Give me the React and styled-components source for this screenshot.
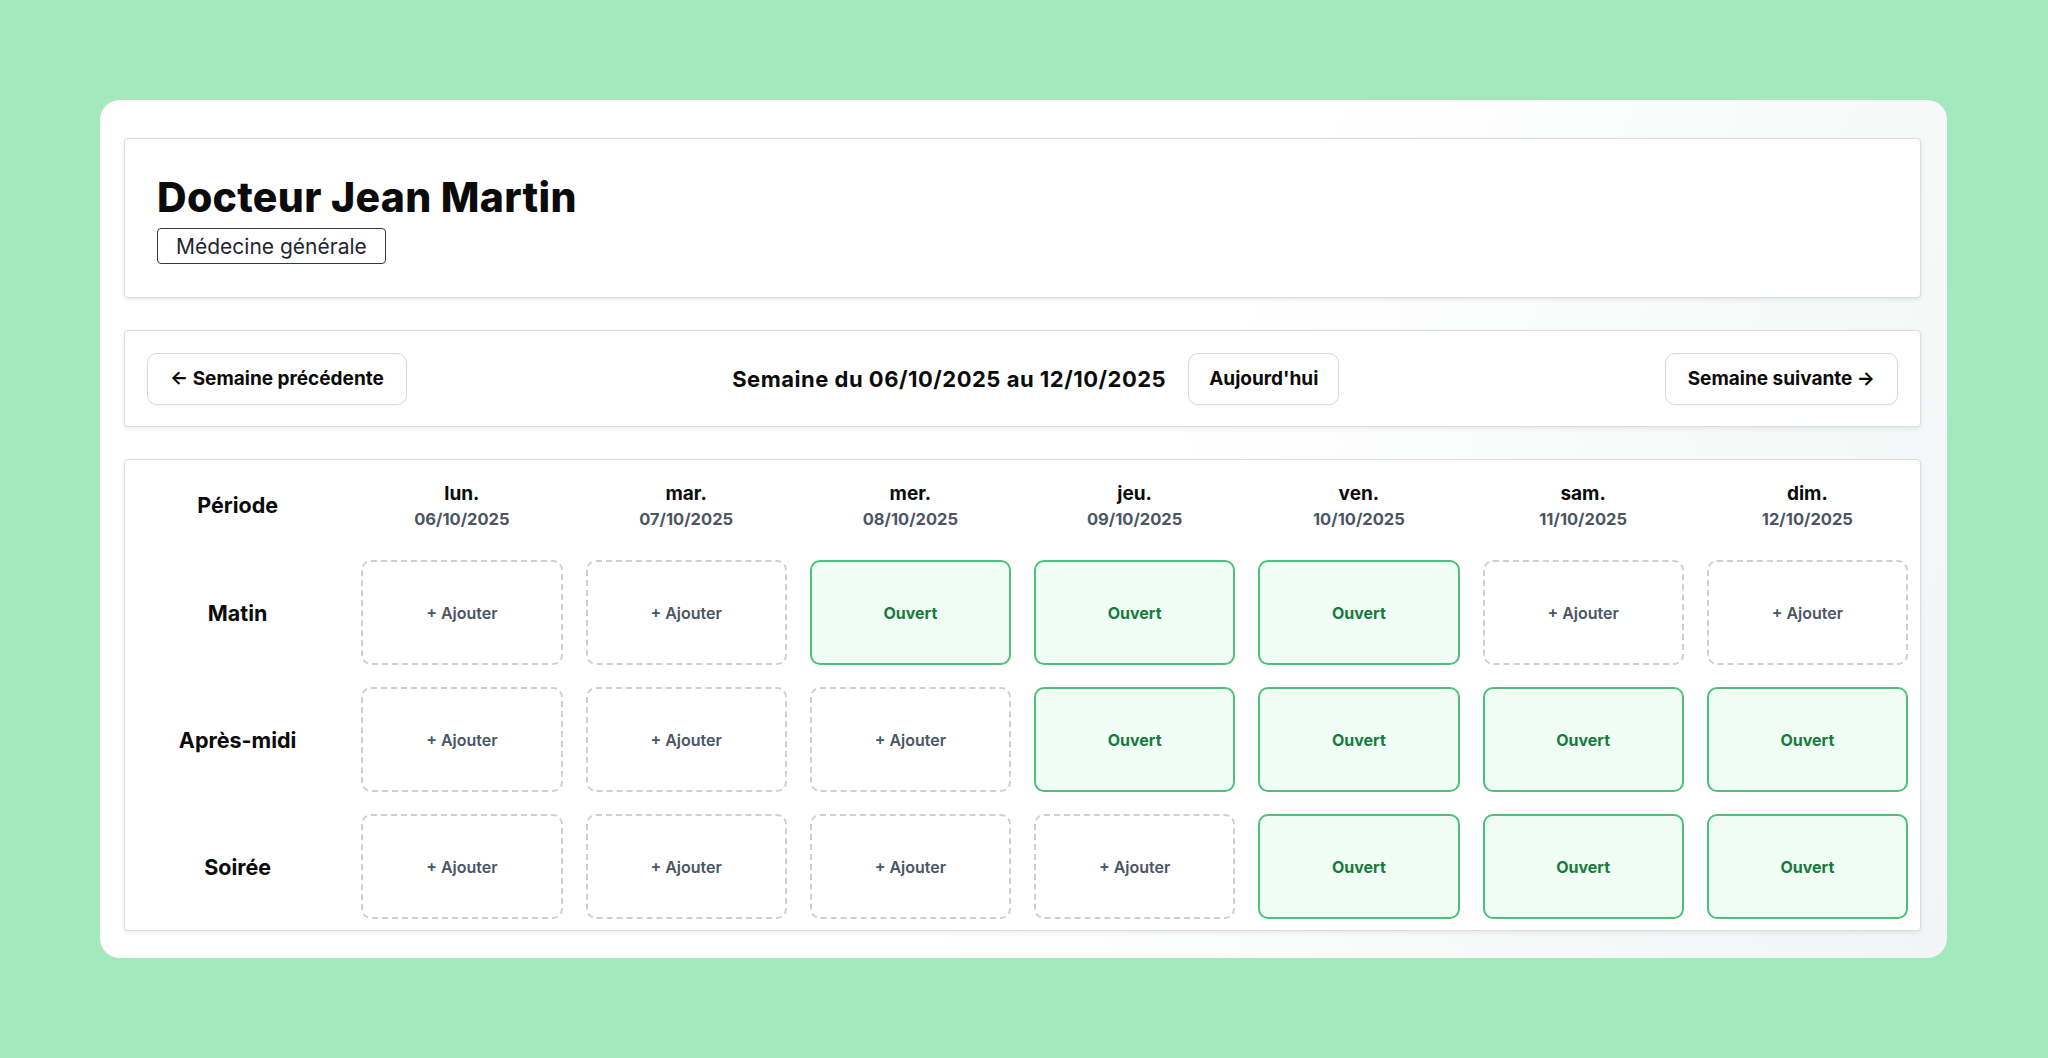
import React from 'react';
import styled, { createGlobalStyle } from 'styled-components';

const GlobalStyle = createGlobalStyle`
  html, body {
    margin: 0;
    padding: 0;
    background: #a4e9bd;
    font-family: Inter, "Noto Sans", Arial, sans-serif;
    color: #0b0b0b;
  }
`;

const Page = styled.div`
  padding: 100px 101px 102px 100px;
`;

// Panneau blanc arrondi qui contient toute la fiche.
const Panel = styled.div`
  background: linear-gradient(115deg, #ffffff 55%, #f1f5f5 100%);
  border-radius: 20px;
  padding: 38px 26px 27px 24px;
  display: flex;
  flex-direction: column;
  gap: 32px;
`;

const Card = styled.section`
  background: #ffffff;
  border: 1px solid #dcdcdc;
  border-radius: 4px;
  box-shadow: 0 2px 4px rgba(0, 0, 0, 0.08);
`;

const Header = styled(Card)`
  height: 160px;
  box-sizing: border-box;
  padding: 33px 32px;
  display: flex;
  flex-direction: column;
  align-items: flex-start;
  gap: 6px;
`;

const Title = styled.h1`
  margin: 0;
  font-size: 41px;
  line-height: 50px;
  font-weight: 800;
  letter-spacing: 0.3px;
`;

const Badge = styled.span`
  display: inline-flex;
  align-items: center;
  height: 37px;
  box-sizing: border-box;
  padding: 0 18px;
  border: 1.5px solid #3a3a3a;
  border-radius: 4px;
  font-size: 21px;
  color: #1f2630;
`;

const Nav = styled(Card)`
  height: 97px;
  box-sizing: border-box;
  padding: 0 22px;
  display: flex;
  align-items: center;
  justify-content: space-between;
`;

const NavButton = styled.button`
  height: 52px;
  padding: 0 ${(p) => p.$pad || 22}px;
  border: 1px solid #d9d9d9;
  border-radius: 10px;
  background: #ffffff;
  font-family: inherit;
  font-size: 19px;
  font-weight: 700;
  color: #0b0b0b;
  cursor: pointer;
  box-shadow: 0 1px 2px rgba(0, 0, 0, 0.04);
`;

const WeekGroup = styled.div`
  display: flex;
  align-items: center;
  gap: 22px;
`;

const WeekLabel = styled.span`
  font-size: 22px;
  font-weight: 700;
  letter-spacing: 0.5px;
`;

const Planning = styled(Card)`
  padding: 12px 12px 11px;
  display: grid;
  grid-template-columns: repeat(8, 1fr);
  grid-template-rows: 66px repeat(3, 105px);
  column-gap: 23px;
  row-gap: 22px;
`;

const HeadCell = styled.div`
  display: flex;
  flex-direction: column;
  align-items: center;
  justify-content: center;
  gap: 4px;
`;

const DayName = styled.span`
  font-size: 19px;
  font-weight: 700;
`;

const DayDate = styled.span`
  font-size: 16.5px;
  font-weight: 700;
  color: #4b5563;
`;

const RowLabel = styled.div`
  display: flex;
  align-items: center;
  justify-content: center;
  font-size: 21.5px;
  font-weight: 700;
`;

const Slot = styled.div`
  display: flex;
  align-items: center;
  justify-content: center;
  box-sizing: border-box;
  border-radius: 10px;
  font-size: 16px;
  font-weight: ${(p) => (p.$open ? 700 : 600)};
  border: 2px ${(p) => (p.$open ? 'solid #4fbf7c' : 'dashed #cfcfcf')};
  background: ${(p) => (p.$open ? '#f0fdf4' : '#ffffff')};
  color: ${(p) => (p.$open ? '#177a3d' : '#4b5563')};
  cursor: pointer;
`;

const days = [
  { name: 'lun.', date: '06/10/2025' },
  { name: 'mar.', date: '07/10/2025' },
  { name: 'mer.', date: '08/10/2025' },
  { name: 'jeu.', date: '09/10/2025' },
  { name: 'ven.', date: '10/10/2025' },
  { name: 'sam.', date: '11/10/2025' },
  { name: 'dim.', date: '12/10/2025' },
];

// Créneaux ouverts par période (index du jour dans la semaine).
const periods = [
  { label: 'Matin', open: [2, 3, 4] },
  { label: 'Après-midi', open: [3, 4, 5, 6] },
  { label: 'Soirée', open: [4, 5, 6] },
];

function App() {
  return (
    <Page>
      <GlobalStyle />
      <Panel>
        <Header>
          <Title>Docteur Jean Martin</Title>
          <Badge>Médecine générale</Badge>
        </Header>

        <Nav>
          <NavButton>← Semaine précédente</NavButton>
          <WeekGroup>
            <WeekLabel>Semaine du 06/10/2025 au 12/10/2025</WeekLabel>
            <NavButton $pad={20}>Aujourd'hui</NavButton>
          </WeekGroup>
          <NavButton>Semaine suivante →</NavButton>
        </Nav>

        <Planning>
          <RowLabel>Période</RowLabel>
          {days.map((d) => (
            <HeadCell key={d.date}>
              <DayName>{d.name}</DayName>
              <DayDate>{d.date}</DayDate>
            </HeadCell>
          ))}
          {periods.map((p) => (
            <React.Fragment key={p.label}>
              <RowLabel>{p.label}</RowLabel>
              {days.map((d, i) => {
                const open = p.open.includes(i);
                return (
                  <Slot key={d.date} $open={open}>
                    {open ? 'Ouvert' : '+ Ajouter'}
                  </Slot>
                );
              })}
            </React.Fragment>
          ))}
        </Planning>
      </Panel>
    </Page>
  );
}

export default App;
